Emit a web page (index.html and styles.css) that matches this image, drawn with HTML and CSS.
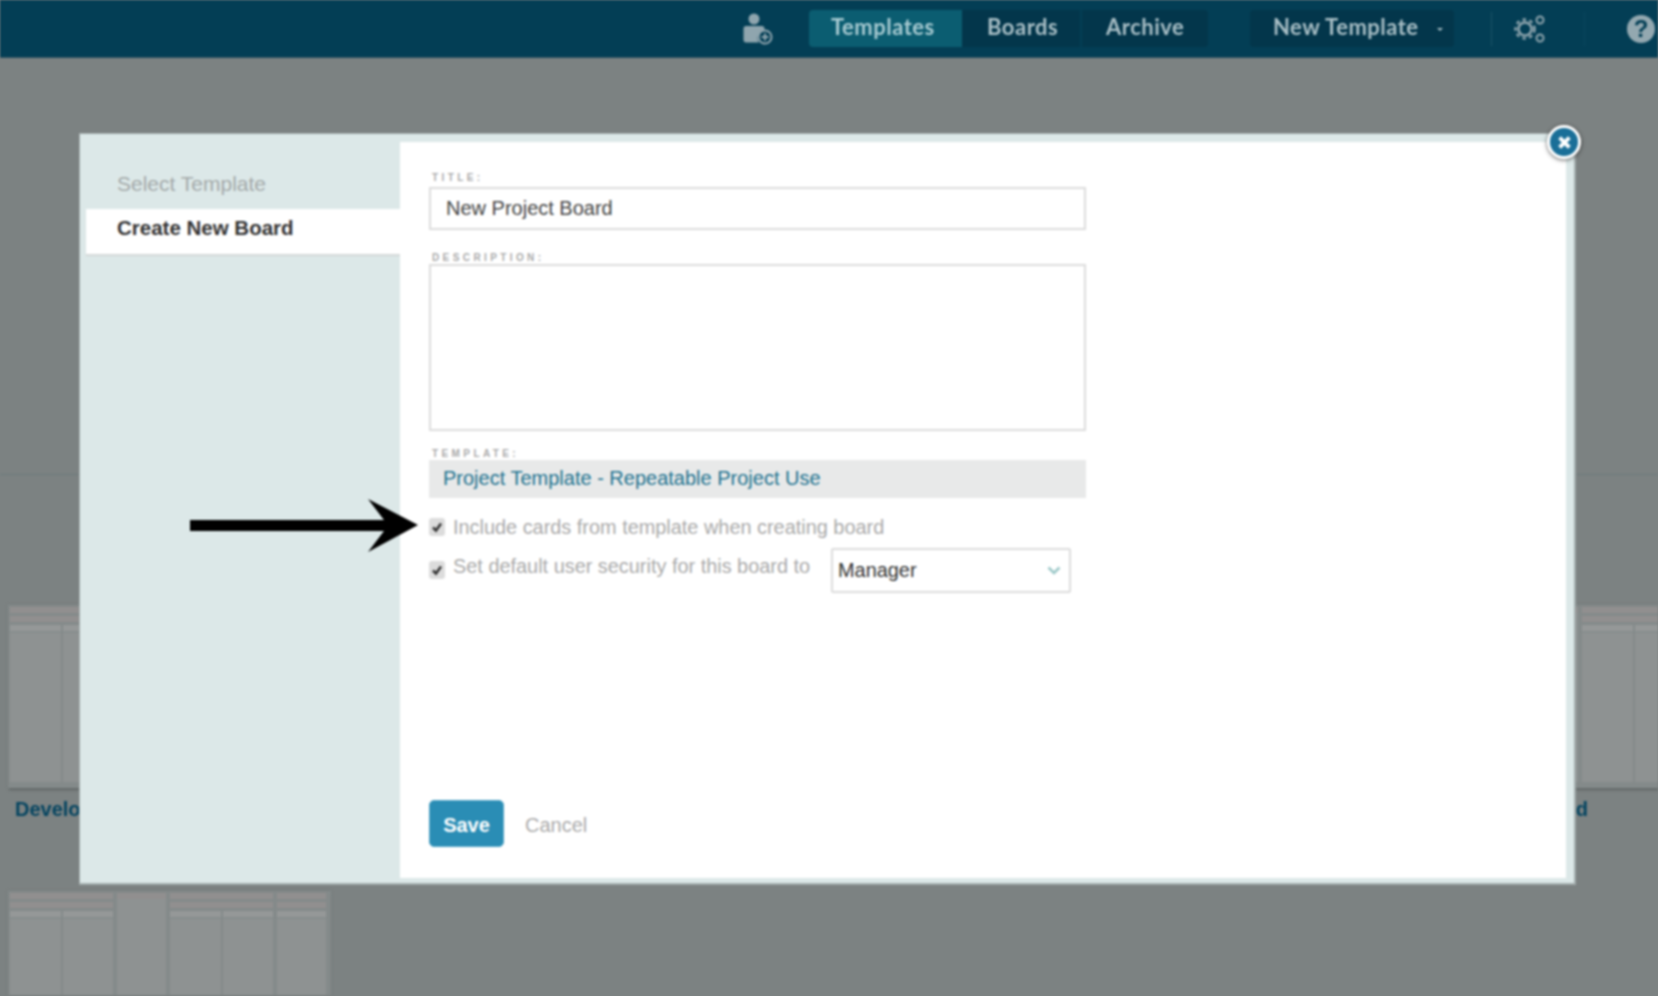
FILE: index.html
```html
<!DOCTYPE html>
<html lang="en">
<head>
    <meta charset="UTF-8">
    <meta name="viewport" content="width=device-width, initial-scale=1.0">
    <title>Templates</title>
    <link rel="stylesheet" href="styles.css">
</head>
<body>

    <header class="topbar">
        <svg class="user-icon" viewBox="0 0 30 32" width="30" height="32">
            <circle cx="11" cy="6" r="5.500" fill="#8fa5ae"/>
            <path d="M3 13h16c1.500 0 2.500 1 2.500 2.500v1.500a8 8 0 0 0-5.500 12.500H3c-1.500 0-2.500-1-2.500-2.500V15.500C.5 14 1.500 13 3 13z" fill="#8fa5ae"/>
            <circle cx="22" cy="24" r="6.500" fill="none" stroke="#8fa5ae" stroke-width="2"/>
            <path d="M22 20.500v7M18.500 24h7" stroke="#8fa5ae" stroke-width="2"/>
        </svg>
        <nav class="tabs">
            <a class="tab tab-active">Templates</a>
            <a class="tab tab-boards">Boards</a>
            <a class="tab tab-archive">Archive</a>
        </nav>
        <div class="new-btn">New Template <span class="caret"></span></div>
        <div class="bar-sep"></div>
        <svg class="gears-icon" viewBox="0 0 34 30" width="34" height="30">
            <circle cx="12" cy="15" r="6.500" fill="none" stroke="#8fa5ae" stroke-width="2.500"/>
            <circle cx="12" cy="15" r="9.500" fill="none" stroke="#8fa5ae" stroke-width="2.500" stroke-dasharray="3.500 3.500"/>
            <circle cx="27" cy="6" r="3.500" fill="none" stroke="#8fa5ae" stroke-width="2"/>
            <circle cx="27" cy="24" r="3.500" fill="none" stroke="#8fa5ae" stroke-width="2"/>
        </svg>
        <div class="bar-sep bar-sep-faint"></div>
        <div class="help-icon">?</div>
    </header>

    <div class="top-area"></div>

    <main class="board-grid">
        <section class="board">
            <div class="thumb">
                <div class="lane lane-wide">
                    <div class="band band-top"></div>
                    <div class="band band-top"></div>
                    <div class="split">
                        <div class="sub"><div class="band"></div></div>
                        <div class="sub"><div class="band"></div></div>
                    </div>
                </div>
                <div class="lane lane-narrow lane-plain"><div class="band band-top"></div></div>
                <div class="lane lane-wide">
                    <div class="band band-top"></div>
                    <div class="band band-top"></div>
                    <div class="split">
                        <div class="sub"><div class="band"></div></div>
                        <div class="sub"><div class="band"></div></div>
                    </div>
                </div>
                <div class="lane lane-narrow">
                    <div class="band band-top"></div>
                    <div class="band band-top"></div>
                    <div class="sub"><div class="band"></div></div>
                </div>
            </div>
            <h3 class="board-name">Development Board</h3>
        </section>

        <section class="board board-last">
            <div class="thumb">
                <div class="lane lane-wide">
                    <div class="band band-top"></div>
                    <div class="band band-top"></div>
                    <div class="split">
                        <div class="sub"><div class="band"></div></div>
                        <div class="sub"><div class="band"></div></div>
                    </div>
                </div>
                <div class="lane lane-narrow lane-plain"><div class="band band-top"></div></div>
                <div class="lane lane-wide">
                    <div class="band band-top"></div>
                    <div class="band band-top"></div>
                    <div class="split">
                        <div class="sub"><div class="band"></div></div>
                        <div class="sub"><div class="band"></div></div>
                    </div>
                </div>
            </div>
            <h3 class="board-name">Development Board</h3>
        </section>

        <section class="board board-second-row">
            <div class="thumb">
                <div class="lane lane-wide">
                    <div class="band band-top"></div>
                    <div class="band band-top"></div>
                    <div class="split">
                        <div class="sub"><div class="band"></div></div>
                        <div class="sub"><div class="band"></div></div>
                    </div>
                </div>
                <div class="lane lane-narrow lane-plain"><div class="band band-top"></div></div>
                <div class="lane lane-wide">
                    <div class="band band-top"></div>
                    <div class="band band-top"></div>
                    <div class="split">
                        <div class="sub"><div class="band"></div></div>
                        <div class="sub"><div class="band"></div></div>
                    </div>
                </div>
                <div class="lane lane-narrow">
                    <div class="band band-top"></div>
                    <div class="band band-top"></div>
                    <div class="sub"><div class="band"></div></div>
                </div>
            </div>
        </section>
    </main>

    <div class="modal">
        <aside class="steps">
            <div class="step">Select Template</div>
            <div class="step step-current">Create New Board</div>
        </aside>

        <form class="panel">
            <label class="field-label">Title:</label>
            <div class="field">New Project Board</div>

            <label class="field-label label-desc">Description:</label>
            <div class="field field-area"></div>

            <label class="field-label label-template">Template:</label>
            <div class="template-name">Project Template - Repeatable Project Use</div>

            <div class="check-row">
                <span class="check"><svg viewBox="0 0 16 16" width="16" height="16"><path d="M4 8.500l3 3 5-7" fill="none" stroke="#333" stroke-width="2.500"/></svg></span>
                <span>Include cards from template when creating board</span>
            </div>

            <div class="check-row check-row-select">
                <span class="check check-low"><svg viewBox="0 0 16 16" width="16" height="16"><path d="M4 8.500l3 3 5-7" fill="none" stroke="#333" stroke-width="2.500"/></svg></span>
                <span class="security-text">Set default user security for this board to</span>
                <div class="select-box">
                    Manager
                    <svg viewBox="0 0 14 9" width="14" height="9"><path d="M1.500 1.500L7 7l5.500-5.500" fill="none" stroke="#9cc8c8" stroke-width="2.500"/></svg>
                </div>
            </div>

            <div class="actions">
                <button type="button" class="save-btn">Save</button>
                <a class="cancel-link">Cancel</a>
            </div>
        </form>

        <div class="close-btn">
            <svg viewBox="0 0 14 14" width="17" height="17"><path d="M3 3l8 8M11 3l-8 8" stroke="#fff" stroke-width="3.200"/></svg>
        </div>
    </div>

    <svg class="arrow" viewBox="0 0 230 54" width="230" height="54">
        <path d="M0 21h194L178 0l50 26-50 27 16-21H0z" fill="#000"/>
    </svg>

</body>
</html>
```

FILE: styles.css
```css
* {
    box-sizing: border-box;
}
html, body {
    margin: 0;
    height: 100%;
    overflow: hidden;
}
body {
    position: relative;
    font-family: "Liberation Sans", Arial, sans-serif;
    background: #7c8282;
    filter: blur(0.8px);
}

/* top bar */
.topbar {
    height: 58px;
    background: #033e55;
    border-bottom: 1px solid #2f5362;
    box-shadow: -4px -4px 0 #033e55, 4px -4px 0 #033e55;
    display: flex;
    align-items: center;
    padding-left: 743px;
}
.user-icon {
    margin-right: 36px;
}
.tabs {
    display: flex;
    height: 37px;
    background: #03364b;
    border-radius: 4px;
    width: 399px;
}
.tab {
    font-family: Lato, sans-serif;
    font-weight: 700;
    font-size: 22px;
    letter-spacing: 0.5px;
    color: #a9bfc6;
    line-height: 33px;
}
.tab-active {
    width: 153px;
    padding-left: 22px;
    background: #0b5d71;
    border-radius: 4px 0 0 4px;
    color: #a8cbd2;
}
.tab-boards {
    width: 120px;
    padding-left: 25px;
    border-right: 2px solid #033e55;
}
.tab-archive {
    padding-left: 24px;
}
.new-btn {
    width: 204px;
    height: 37px;
    margin-left: 42px;
    padding-left: 23px;
    background: #03364b;
    border-radius: 4px;
    font-family: Lato, sans-serif;
    font-weight: 700;
    font-size: 22px;
    letter-spacing: 0.5px;
    line-height: 33px;
    color: #a9bfc6;
    display: flex;
    align-items: flex-start;
    gap: 18px;
}
.caret {
    border: 3px solid transparent;
    border-top-color: #a9bfc6;
    margin-top: 18px;
}
.bar-sep {
    width: 1px;
    height: 34px;
    background: #1a5367;
    margin-left: 37px;
    margin-right: 21px;
}
.bar-sep-faint {
    background: #0a475d;
    margin-left: 37px;
    margin-right: 42px;
}
.help-icon {
    width: 28px;
    height: 28px;
    border-radius: 50%;
    background: #93a8b0;
    color: #033e55;
    font-weight: 700;
    font-size: 24px;
    line-height: 28px;
    text-align: center;
}

/* page behind the dialog */
.top-area {
    height: 417px;
    border-bottom: 1px solid #6c7c7d;
}
.board-grid {
    display: grid;
    grid-template-columns: repeat(5, 323px);
    column-gap: 30px;
    row-gap: 71px;
    height: calc(100vh - 476px);
    overflow: hidden;
    padding: 130px 0 0 8px;
}
.board-last {
    grid-column: 5;
}
.board-second-row {
    grid-column: 1;
}
.thumb {
    height: 183px;
    padding: 2px 4px 6px 2px;
    background: #848a8a;
    box-shadow: 0 0 2px #747a7a, 0 3px 2px -1px #5e6363;
    display: flex;
    gap: 4px;
}
.lane {
    flex: none;
    display: flex;
    flex-direction: column;
    gap: 3px;
}
.lane-wide {
    width: 103px;
}
.lane-narrow {
    width: 49px;
}
.lane-plain {
    background: #8e9292;
}
.band {
    height: 6px;
    flex: none;
    background: #959898;
    box-shadow: 0 2px 0 #878d8d;
}
.band-top {
    background: #918f8f;
    box-shadow: none;
}
.split {
    flex: 1;
    display: flex;
    gap: 2px;
}
.sub {
    flex: 1;
    background: #8e9292;
}
.board-name {
    margin: 10px 0 0 7px;
    font-size: 20px;
    line-height: 22px;
    color: #044460;
    white-space: nowrap;
}
.board-last .board-name {
    margin-left: -21px;
}

/* dialog */
.modal {
    position: absolute;
    left: 79px;
    top: 133px;
    width: 1497px;
    height: 752px;
    display: flex;
    background: #dce8e8;
    border: 1px solid #a3acac;
    border-width: 1px 2px 2px 1px;
    padding: 8px 8px 5px 0;
}
.steps {
    width: 320px;
    padding: 18px 0 0 6px;
}
.step {
    padding-left: 31px;
    height: 49px;
    font-size: 21px;
    line-height: 48px;
    color: #a3a9a9;
}
.step-current {
    height: 45px;
    font-size: 20.500px;
    line-height: 38px;
    background: #fff;
    color: #333;
    font-weight: 700;
    box-shadow: 0 2px 1px #d5d9d9;
}
.panel {
    flex: 1;
    background: #fff;
    padding: 30px 0 0 29px;
    display: flex;
    flex-direction: column;
    align-items: flex-start;
}
.field-label {
    font-size: 10px;
    line-height: 12px;
    font-weight: 700;
    letter-spacing: 3.4px;
    color: #a9a9a9;
    text-transform: uppercase;
    margin-left: 3px;
}
.field {
    width: 657px;
    height: 43px;
    margin-top: 3px;
    padding-left: 15px;
    border: 2px solid #dcdcdc;
    font-size: 20px;
    line-height: 39px;
    color: #444;
}
.field-area {
    height: 167px;
    margin-top: 0;
}
.label-desc {
    margin-top: 22px;
}
.label-template {
    margin-top: 17px;
}
.template-name {
    width: 657px;
    height: 38px;
    padding-left: 14px;
    background: #e8e9e9;
    font-size: 20px;
    line-height: 36px;
    color: #22728f;
}
.check-row {
    display: flex;
    align-items: center;
    margin-top: 19px;
    height: 20px;
    font-size: 19.900px;
    color: #a9a9a9;
}
.check {
    width: 16px;
    height: 18px;
    margin-right: 8px;
    background: #dcdcdc;
    border-radius: 3px;
    display: flex;
    align-items: center;
}
.check-row-select {
    margin-top: 11px;
    height: 46px;
    align-items: flex-start;
}
.check-low {
    margin-top: 13px;
}
.security-text {
    margin-top: 7px;
    width: 378px;
    white-space: nowrap;
}
.select-box {
    width: 240px;
    height: 45px;
    padding: 0 8px 0 5px;
    border: 2px solid #dcdcdc;
    border-radius: 2px;
    color: #333;
    display: flex;
    align-items: center;
    justify-content: space-between;
}
.actions {
    margin-top: 206px;
    display: flex;
    align-items: center;
    gap: 21px;
}
.save-btn {
    width: 75px;
    height: 47px;
    padding: 4px 0 0;
    background: #2a8db5;
    border: 1px solid #55a6c7;
    border-radius: 5px;
    color: #fff;
    font-family: inherit;
    font-size: 20px;
    font-weight: 700;
}
.cancel-link {
    margin-top: 4px;
    font-size: 20px;
    color: #aaa;
}
.close-btn {
    position: absolute;
    top: -9px;
    right: -7px;
    width: 34px;
    height: 34px;
    border-radius: 50%;
    background: #1a6f98;
    border: 3px solid #fff;
    box-shadow: 0 1px 4px rgba(0, 0, 0, 0.6);
    display: flex;
    align-items: center;
    justify-content: center;
}

/* annotation */
.arrow {
    position: absolute;
    left: 190px;
    top: 499px;
}
```
